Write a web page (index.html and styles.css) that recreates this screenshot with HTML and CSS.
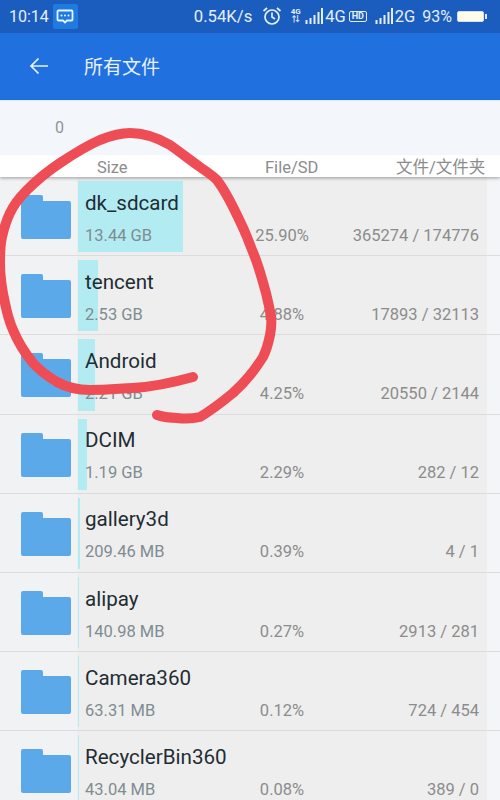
FILE: index.html
```html
<!DOCTYPE html>
<html lang="zh">
<head>
<meta charset="utf-8">
<title>所有文件</title>
<link rel="stylesheet" href="styles.css">
</head>
<body>
<div class="page">
  <div class="status">
    <span class="time">10:14</span>
    <span class="msg"><svg width="18" height="15" viewBox="0 0 18 15"><path d="M2.500 1.500h13a1 1 0 0 1 1 1v8a1 1 0 0 1-1 1h-4.500l-2 2-2-2H2.500a1 1 0 0 1-1-1v-8a1 1 0 0 1 1-1z" fill="none" stroke="#e8f4ff" stroke-width="1.800"/><circle cx="5.500" cy="6.500" r="1" fill="#e8f4ff"/><circle cx="9" cy="6.500" r="1" fill="#e8f4ff"/><circle cx="12.500" cy="6.500" r="1" fill="#e8f4ff"/></svg></span>
    <span class="spacer"></span>
    <span class="speed">0.54K/s</span>
    <svg class="alarm" width="20" height="20" viewBox="0 0 20 20"><circle cx="10" cy="11" r="7" fill="none" stroke="#e6eefa" stroke-width="1.700"/><path d="M10 6.500V11l3 2M1.500 5L5 2M18.500 5L15 2" fill="none" stroke="#e6eefa" stroke-width="1.700"/></svg>
    <span class="mini">4G<br>⇅</span>
    <svg class="sig" width="18" height="18" viewBox="0 0 18 18"><path d="M1.500 17v-4M5.500 17v-6M9.500 17V8M13.500 17V5M17 17V1" stroke="#e6eefa" stroke-width="2"/></svg>
    <span class="net">4G</span>
    <span class="hd">HD</span>
    <svg class="sig sig2" width="18" height="18" viewBox="0 0 18 18"><path d="M1.500 17v-4M5.500 17v-6M9.500 17V8M13.500 17V5M17 17V1" stroke="#e6eefa" stroke-width="2"/></svg>
    <span class="net">2G</span>
    <span class="batt-text">93%</span>
    <span class="batt"></span>
  </div>
  <div class="appbar">
    <svg class="back" width="20" height="18" viewBox="0 0 20 18"><path d="M19 9H2M9.500 1.500L2 9l7.500 7.500" fill="none" stroke="#e8f1fd" stroke-width="1.700"/></svg>
    <span class="title">所有文件</span>
  </div>
  <div class="summary">0</div>
  <div class="head">
    <span class="h-size">Size</span>
    <span class="h-file">File/SD</span>
    <span class="h-count">文件/文件夹</span>
  </div>
  <div class="list">
    <div class="row">
      <svg class="folder" viewBox="0 0 50 44"><path d="M2 0h18a2 2 0 0 1 2 2v4h26a2 2 0 0 1 2 2v34a2 2 0 0 1-2 2H2a2 2 0 0 1-2-2V2a2 2 0 0 1 2-2z"/></svg>
      <div class="main"><span class="bar" style="width:105px"></span><div class="name">dk_sdcard</div><div class="sub">13.44 GB</div></div>
      <div class="pct">25.90%</div><div class="cnt">365274 / 174776</div>
    </div>
    <div class="row">
      <svg class="folder" viewBox="0 0 50 44"><path d="M2 0h18a2 2 0 0 1 2 2v4h26a2 2 0 0 1 2 2v34a2 2 0 0 1-2 2H2a2 2 0 0 1-2-2V2a2 2 0 0 1 2-2z"/></svg>
      <div class="main"><span class="bar" style="width:20px"></span><div class="name">tencent</div><div class="sub">2.53 GB</div></div>
      <div class="pct">4.88%</div><div class="cnt">17893 / 32113</div>
    </div>
    <div class="row">
      <svg class="folder" viewBox="0 0 50 44"><path d="M2 0h18a2 2 0 0 1 2 2v4h26a2 2 0 0 1 2 2v34a2 2 0 0 1-2 2H2a2 2 0 0 1-2-2V2a2 2 0 0 1 2-2z"/></svg>
      <div class="main"><span class="bar" style="width:17px"></span><div class="name">Android</div><div class="sub">2.21 GB</div></div>
      <div class="pct">4.25%</div><div class="cnt">20550 / 2144</div>
    </div>
    <div class="row">
      <svg class="folder" viewBox="0 0 50 44"><path d="M2 0h18a2 2 0 0 1 2 2v4h26a2 2 0 0 1 2 2v34a2 2 0 0 1-2 2H2a2 2 0 0 1-2-2V2a2 2 0 0 1 2-2z"/></svg>
      <div class="main"><span class="bar" style="width:9px"></span><div class="name">DCIM</div><div class="sub">1.19 GB</div></div>
      <div class="pct">2.29%</div><div class="cnt">282 / 12</div>
    </div>
    <div class="row">
      <svg class="folder" viewBox="0 0 50 44"><path d="M2 0h18a2 2 0 0 1 2 2v4h26a2 2 0 0 1 2 2v34a2 2 0 0 1-2 2H2a2 2 0 0 1-2-2V2a2 2 0 0 1 2-2z"/></svg>
      <div class="main"><span class="bar" style="width:2px"></span><div class="name">gallery3d</div><div class="sub">209.46 MB</div></div>
      <div class="pct">0.39%</div><div class="cnt">4 / 1</div>
    </div>
    <div class="row">
      <svg class="folder" viewBox="0 0 50 44"><path d="M2 0h18a2 2 0 0 1 2 2v4h26a2 2 0 0 1 2 2v34a2 2 0 0 1-2 2H2a2 2 0 0 1-2-2V2a2 2 0 0 1 2-2z"/></svg>
      <div class="main"><span class="bar" style="width:1px"></span><div class="name">alipay</div><div class="sub">140.98 MB</div></div>
      <div class="pct">0.27%</div><div class="cnt">2913 / 281</div>
    </div>
    <div class="row">
      <svg class="folder" viewBox="0 0 50 44"><path d="M2 0h18a2 2 0 0 1 2 2v4h26a2 2 0 0 1 2 2v34a2 2 0 0 1-2 2H2a2 2 0 0 1-2-2V2a2 2 0 0 1 2-2z"/></svg>
      <div class="main"><span class="bar" style="width:1px"></span><div class="name">Camera360</div><div class="sub">63.31 MB</div></div>
      <div class="pct">0.12%</div><div class="cnt">724 / 454</div>
    </div>
    <div class="row">
      <svg class="folder" viewBox="0 0 50 44"><path d="M2 0h18a2 2 0 0 1 2 2v4h26a2 2 0 0 1 2 2v34a2 2 0 0 1-2 2H2a2 2 0 0 1-2-2V2a2 2 0 0 1 2-2z"/></svg>
      <div class="main"><span class="bar" style="width:1px"></span><div class="name">RecyclerBin360</div><div class="sub">43.04 MB</div></div>
      <div class="pct">0.08%</div><div class="cnt">389 / 0</div>
    </div>
  </div>
  <svg class="scribble" width="500" height="800" viewBox="0 0 500 800"><path d="M193 377C175 382 150 387 133 388C115 389 105 390 90 390C78 390 68 388 57 382C47 376 41 372 33 363C24 352 18 342 13 330C9 321 7 313 5 303C2 290 0 276 0 263C0 253 0 246 2 237C4 228 6 221 10 213C14 204 20 197 27 190C37 180 48 171 60 163C72 155 86 146 100 140C110 136 120 133 130 133C145 133 158 138 170 145C180 152 190 160 200 167C207 172 212 175 217 180C223 188 228 197 233 207C238 217 243 227 247 237C250 245 253 252 256 260C260 271 263 282 266 293C268 302 270 309 271 317C272 325 271 330 270 335C268 345 266 351 263 357C255 370 245 382 233 393C222 402 212 410 200 417C192 419 185 419 177 418C170 418 163 417 157 415" fill="none" stroke="#ee4d55" stroke-width="10" stroke-linecap="round" stroke-linejoin="round"/></svg>
</div>
</body>
</html>
```
FILE: styles.css
```css
* { box-sizing: border-box; }
html, body { margin: 0; padding: 0; }
body { font-family: Roboto, "Noto Sans CJK SC", sans-serif; background: #eee; }
.page { position: relative; width: 500px; height: 800px; overflow: hidden; background: #efefef; }

.status { display: flex; align-items: center; height: 33px; background: #1a5dbf; color: #e6eefa; padding: 0 13px 1px 9px; font-size: 16px; }
.msg { display: flex; align-items: center; justify-content: center; width: 25px; height: 25px; margin-left: 4px; background: #1f7be0; border-radius: 2px; }
.spacer { flex: 1; }
.speed { font-size: 16.700px; margin-right: 10px; }
.alarm { margin-right: 8px; }
.mini { font-size: 8px; font-weight: 700; line-height: 8px; text-align: center; width: 11px; margin-right: 4px; }
.sig { margin-right: 2px; }
.sig2 { margin-left: 8px; }
.net { font-size: 16.500px; }
.hd { font-size: 9px; font-weight: 700; line-height: 9px; width: 18px; text-align: center; border: 1.500px solid #e6eefa; border-radius: 2px; margin-left: 3px; }
.batt-text { font-size: 16px; margin-left: 7px; }
.batt { position: relative; display: block; width: 27px; height: 11px; margin-left: 5px; margin-right: 3px; border: 1px solid #cfe0f5; border-radius: 2px; background: #fffbe9; }
.batt::after { content: ""; position: absolute; right: -4px; top: 2px; width: 2px; height: 5px; background: #e6eefa; }

.appbar { display: flex; align-items: center; height: 67px; padding-bottom: 2px; background: #2170e0; color: #e9f2fd; }
.back { margin-left: 29px; }
.title { margin-left: 35px; font-size: 19px; }

.summary { height: 55px; padding: 17px 0 0 55px; background: #f3f7fb; border-top: 1px solid #d8eefa; color: #8f9498; font-size: 16px; line-height: 20px; }

.head { position: relative; display: flex; height: 22px; padding-top: 3px; background: #fff; color: #8c8c8c; font-size: 16.500px; line-height: 20px; box-shadow: 0 1.500px 3px rgba(0,0,0,.3); z-index: 1; }
.h-size { margin-left: 97px; width: 168px; }
.h-file { width: 131px; }
.h-count { white-space: nowrap; }

.list { display: flex; flex-direction: column; }
.row { display: flex; align-items: stretch; height: 79.200px; padding: 4px 0 3px 21px; border-bottom: 1px solid #dcdcdc; background: linear-gradient(90deg, #f1f2f4 15.500%, #eeeeee 15.500%, #eeeeee 97.500%, #f3f5f8 97.500%); }
.folder { width: 50px; height: 44px; margin-top: 14px; fill: #5ca9e9; flex: none; }
.main { position: relative; width: 170px; margin-left: 7px; padding-left: 7px; }
.bar { position: absolute; left: 0; top: 0; bottom: 0; background: #b2ebf2; }
.name { position: relative; font-size: 20.600px; line-height: 24px; margin-top: 9.600px; color: #1f2d33; white-space: nowrap; }
.sub { position: relative; font-size: 16.500px; line-height: 20px; margin-top: 11px; color: #7f8c90; white-space: nowrap; }
.pct { width: 68px; margin-top: 44.600px; font-size: 16.500px; line-height: 20px; color: #8c8c8c; text-align: center; }
.cnt { width: 163px; margin-top: 44.600px; font-size: 16.500px; line-height: 20px; color: #8c8c8c; text-align: right; white-space: nowrap; }

.scribble { position: absolute; left: 0; top: 0; z-index: 2; pointer-events: none; }
```
